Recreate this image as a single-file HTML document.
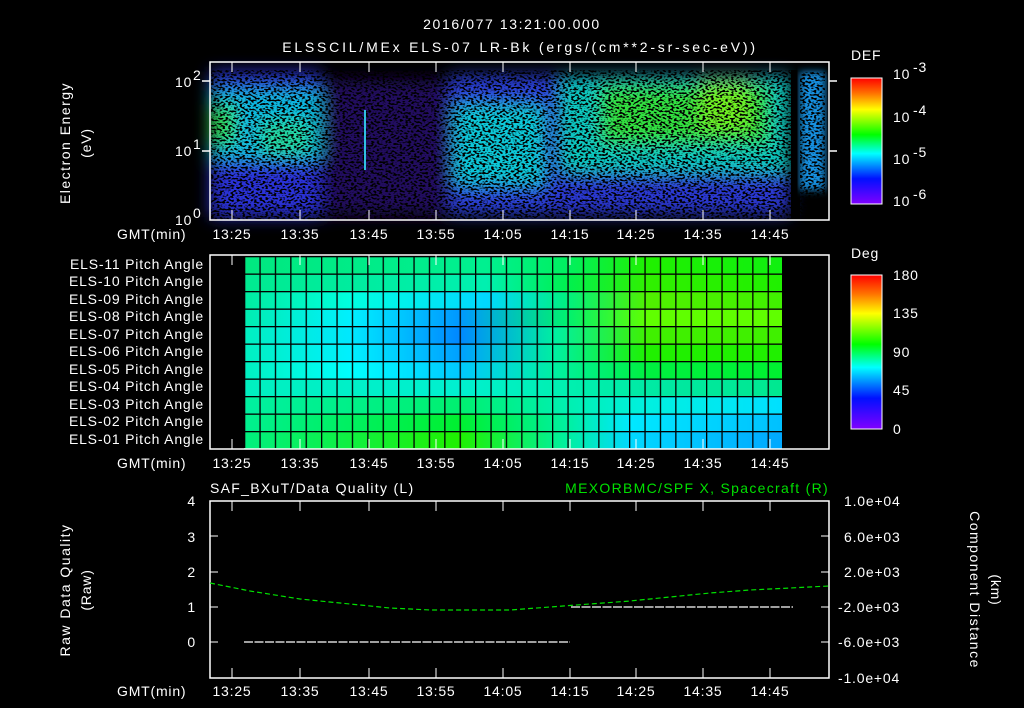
<!DOCTYPE html>
<html><head><meta charset="utf-8"><style>
html,body{margin:0;padding:0;background:#000;width:1024px;height:708px;overflow:hidden}
svg text{font-family:"Liberation Sans",sans-serif;fill:#fff;font-size:14px;letter-spacing:0.8px}
</style></head><body>
<svg width="1024" height="708" viewBox="0 0 1024 708" xmlns="http://www.w3.org/2000/svg">
<defs>
<linearGradient id="cb" x1="0" y1="0" x2="0" y2="1">
<stop offset="0" stop-color="#ff0000"/><stop offset="0.12" stop-color="#ff7000"/><stop offset="0.25" stop-color="#ffff00"/><stop offset="0.45" stop-color="#00ff00"/><stop offset="0.6" stop-color="#00ffff"/><stop offset="0.8" stop-color="#0010ff"/><stop offset="1" stop-color="#8000ff"/>
</linearGradient>
<filter id="bl" x="-20%" y="-20%" width="140%" height="140%"><feGaussianBlur stdDeviation="8"/></filter>
<filter id="bl2"><feGaussianBlur stdDeviation="4"/></filter>
<filter id="spk" x="0" y="0" width="100%" height="100%"><feTurbulence type="fractalNoise" baseFrequency="0.35 0.55" numOctaves="1" seed="7"/><feColorMatrix type="matrix" values="0 0 0 0 0  0 0 0 0 0  0 0 0 0 0  -9 0 0 0 4.6"/></filter>
<linearGradient id="r1"><stop offset="0" stop-color="#00e880"/><stop offset="0.45" stop-color="#00f090"/><stop offset="0.6" stop-color="#00f060"/><stop offset="0.75" stop-color="#20f000"/><stop offset="1" stop-color="#10f010"/></linearGradient>
<linearGradient id="r2"><stop offset="0" stop-color="#00ea90"/><stop offset="0.45" stop-color="#00f0b0"/><stop offset="0.6" stop-color="#00f050"/><stop offset="0.75" stop-color="#30f000"/><stop offset="1" stop-color="#20f000"/></linearGradient>
<linearGradient id="r3"><stop offset="0" stop-color="#00eca0"/><stop offset="0.2" stop-color="#00ffe0"/><stop offset="0.45" stop-color="#00d8ff"/><stop offset="0.6" stop-color="#00f080"/><stop offset="0.75" stop-color="#50f000"/><stop offset="1" stop-color="#40f000"/></linearGradient>
<linearGradient id="r4"><stop offset="0" stop-color="#00eeb0"/><stop offset="0.2" stop-color="#00f0ff"/><stop offset="0.4" stop-color="#0098ff"/><stop offset="0.6" stop-color="#00f070"/><stop offset="0.75" stop-color="#60ff00"/><stop offset="1" stop-color="#60ff00"/></linearGradient>
<linearGradient id="r5"><stop offset="0" stop-color="#00f0c0"/><stop offset="0.2" stop-color="#00e8ff"/><stop offset="0.4" stop-color="#0088ff"/><stop offset="0.58" stop-color="#00f0a0"/><stop offset="0.75" stop-color="#40f000"/><stop offset="1" stop-color="#40f000"/></linearGradient>
<linearGradient id="r6"><stop offset="0" stop-color="#00f0c0"/><stop offset="0.2" stop-color="#00f0ff"/><stop offset="0.4" stop-color="#00a0ff"/><stop offset="0.58" stop-color="#00f0a0"/><stop offset="0.75" stop-color="#20f000"/><stop offset="1" stop-color="#20f000"/></linearGradient>
<linearGradient id="r7"><stop offset="0" stop-color="#00f0c0"/><stop offset="0.2" stop-color="#00ffff"/><stop offset="0.4" stop-color="#00c8ff"/><stop offset="0.58" stop-color="#00f0a0"/><stop offset="0.75" stop-color="#00f040"/><stop offset="1" stop-color="#00f030"/></linearGradient>
<linearGradient id="r8"><stop offset="0" stop-color="#00f0c0"/><stop offset="0.4" stop-color="#00f0d0"/><stop offset="0.6" stop-color="#00f0b0"/><stop offset="0.8" stop-color="#00e8a0"/><stop offset="1" stop-color="#00e890"/></linearGradient>
<linearGradient id="r9"><stop offset="0" stop-color="#00f0a0"/><stop offset="0.4" stop-color="#00f070"/><stop offset="0.6" stop-color="#00f0b0"/><stop offset="0.75" stop-color="#00f0e0"/><stop offset="1" stop-color="#00e0ff"/></linearGradient>
<linearGradient id="r10"><stop offset="0" stop-color="#00f090"/><stop offset="0.4" stop-color="#00f030"/><stop offset="0.6" stop-color="#00f0a0"/><stop offset="0.72" stop-color="#00e8ff"/><stop offset="1" stop-color="#00c0ff"/></linearGradient>
<linearGradient id="r11"><stop offset="0" stop-color="#00f080"/><stop offset="0.4" stop-color="#20f000"/><stop offset="0.6" stop-color="#00f0a0"/><stop offset="0.72" stop-color="#00d8ff"/><stop offset="1" stop-color="#00a8ff"/></linearGradient>
<pattern id="grid" x="244" y="256" width="15.4" height="17.5" patternUnits="userSpaceOnUse"><rect x="0" y="0" width="1.3" height="17.5" fill="#000"/><rect x="0" y="0" width="15.4" height="1.3" fill="#000"/></pattern>
</defs>

<text x="512" y="29" text-anchor="middle" font-size="16" style="letter-spacing:1.6px">2016/077 13:21:00.000</text>
<text x="520" y="52" text-anchor="middle" font-size="17" style="letter-spacing:2.8px">ELSSCIL/MEx ELS-07 LR-Bk  (ergs/(cm**2-sr-sec-eV))</text>

<!-- top spectrogram -->
<rect x="211" y="70" width="580" height="150" fill="#000"/>
<g filter="url(#bl)">
<rect x="211" y="72" width="110" height="145" fill="#2a30d8"/>
<rect x="211" y="90" width="110" height="70" fill="#10b8e0"/>
<rect x="211" y="105" width="25" height="40" fill="#30e060"/>
<rect x="260" y="120" width="50" height="35" fill="#20d8a0"/>
<rect x="322" y="80" width="128" height="135" fill="#200c60"/>
<rect x="450" y="75" width="110" height="140" fill="#2a40d8"/>
<rect x="455" y="105" width="90" height="80" fill="#10c8d8"/>
<rect x="545" y="75" width="245" height="140" fill="#2a38d0"/>
<rect x="560" y="78" width="230" height="95" fill="#10c8c0"/>
<rect x="600" y="85" width="170" height="60" fill="#30e040"/>
<rect x="700" y="80" width="50" height="50" fill="#70f020"/>
</g>
<rect x="211" y="70" width="580" height="150" filter="url(#spk)"/>
<rect x="791" y="70" width="9" height="150" fill="#000"/>
<rect x="800" y="72" width="25" height="118" fill="#1890e0" filter="url(#bl2)"/>
<rect x="800" y="72" width="25" height="145" filter="url(#spk)"/>
<rect x="364" y="110" width="2" height="60" fill="#30c0e0"/>
<rect x="210" y="62" width="619" height="158" fill="none" stroke="#fff" stroke-width="1.5"/>
<g stroke="#fff" stroke-width="1.5">
<line x1="202" y1="81" x2="210" y2="81"/><line x1="202" y1="151" x2="210" y2="151"/>
<line x1="829" y1="81" x2="837" y2="81"/><line x1="829" y1="151" x2="837" y2="151"/>
</g>
<text x="175" y="87" font-size="14">10</text><text x="193" y="80" font-size="9">2</text>
<text x="175" y="156" font-size="14">10</text><text x="193" y="149" font-size="9">1</text>
<text x="175" y="225" font-size="14">10</text><text x="193" y="218" font-size="9">0</text>
<text transform="translate(70,143) rotate(-90)" text-anchor="middle" style="letter-spacing:1.5px">Electron Energy</text>
<text transform="translate(91,143) rotate(-90)" text-anchor="middle">(eV)</text>
<g font-size="14">
<text x="117" y="239">GMT(min)</text>
<text x="232" y="239" text-anchor="middle">13:25</text><text x="300" y="239" text-anchor="middle">13:35</text><text x="369" y="239" text-anchor="middle">13:45</text><text x="436" y="239" text-anchor="middle">13:55</text><text x="503" y="239" text-anchor="middle">14:05</text><text x="570" y="239" text-anchor="middle">14:15</text><text x="636" y="239" text-anchor="middle">14:25</text><text x="703" y="239" text-anchor="middle">14:35</text><text x="770" y="239" text-anchor="middle">14:45</text>
</g>

<!-- DEF colorbar -->
<text x="851" y="60" font-size="15">DEF</text>
<rect x="851" y="78" width="31" height="126" fill="url(#cb)" stroke="#fff" stroke-width="1"/>
<text x="893" y="79" font-size="15">10</text><text x="913" y="72" font-size="10">-3</text>
<text x="893" y="122" font-size="15">10</text><text x="913" y="115" font-size="10">-4</text>
<text x="893" y="164" font-size="15">10</text><text x="913" y="157" font-size="10">-5</text>
<text x="893" y="206" font-size="15">10</text><text x="913" y="199" font-size="10">-6</text>

<!-- middle pitch angle -->
<rect x="244" y="256" width="538" height="192" fill="#000"/>
<g>
<rect x="244" y="256.0" width="538" height="17.5" fill="url(#r1)"/>
<rect x="244" y="273.5" width="538" height="17.5" fill="url(#r2)"/>
<rect x="244" y="291.0" width="538" height="17.5" fill="url(#r3)"/>
<rect x="244" y="308.5" width="538" height="17.5" fill="url(#r4)"/>
<rect x="244" y="326.0" width="538" height="17.5" fill="url(#r5)"/>
<rect x="244" y="343.5" width="538" height="17.5" fill="url(#r6)"/>
<rect x="244" y="361.0" width="538" height="17.5" fill="url(#r7)"/>
<rect x="244" y="378.5" width="538" height="17.5" fill="url(#r8)"/>
<rect x="244" y="396.0" width="538" height="17.5" fill="url(#r9)"/>
<rect x="244" y="413.5" width="538" height="17.5" fill="url(#r10)"/>
<rect x="244" y="431.0" width="538" height="17.5" fill="url(#r11)"/>
</g>
<rect x="244" y="256" width="538" height="192" fill="url(#grid)"/>
<rect x="210" y="255" width="619" height="194" fill="none" stroke="#fff" stroke-width="1.5"/>
<g font-size="13" text-anchor="end" style="letter-spacing:1.1px">
<text x="204" y="269">ELS-11 Pitch Angle</text><text x="204" y="286">ELS-10 Pitch Angle</text><text x="204" y="304">ELS-09 Pitch Angle</text><text x="204" y="321">ELS-08 Pitch Angle</text><text x="204" y="339">ELS-07 Pitch Angle</text><text x="204" y="356">ELS-06 Pitch Angle</text><text x="204" y="374">ELS-05 Pitch Angle</text><text x="204" y="391">ELS-04 Pitch Angle</text><text x="204" y="409">ELS-03 Pitch Angle</text><text x="204" y="426">ELS-02 Pitch Angle</text><text x="204" y="444">ELS-01 Pitch Angle</text>
</g>
<g font-size="14">
<text x="117" y="468">GMT(min)</text>
<text x="232" y="468" text-anchor="middle">13:25</text><text x="300" y="468" text-anchor="middle">13:35</text><text x="369" y="468" text-anchor="middle">13:45</text><text x="436" y="468" text-anchor="middle">13:55</text><text x="503" y="468" text-anchor="middle">14:05</text><text x="570" y="468" text-anchor="middle">14:15</text><text x="636" y="468" text-anchor="middle">14:25</text><text x="703" y="468" text-anchor="middle">14:35</text><text x="770" y="468" text-anchor="middle">14:45</text>
</g>

<!-- Deg colorbar -->
<text x="851" y="258" font-size="15">Deg</text>
<rect x="851" y="275" width="31" height="154" fill="url(#cb)" stroke="#fff" stroke-width="1"/>
<g font-size="15"><text x="893" y="280">180</text><text x="893" y="318">135</text><text x="893" y="357">90</text><text x="893" y="395">45</text><text x="893" y="434">0</text></g>

<!-- bottom -->
<text x="210" y="493" font-size="15" style="letter-spacing:1.3px">SAF_BXuT/Data Quality (L)</text>
<text x="829" y="493" font-size="15" text-anchor="end" style="fill:#00e000;letter-spacing:1.3px">MEXORBMC/SPF X, Spacecraft (R)</text>
<rect x="210" y="501" width="619" height="177" fill="none" stroke="#fff" stroke-width="1.5"/>
<polyline points="210,583 250,591 300,599 350,604 390,608 430,610 470,610 510,610 550,607 590,604 630,601 670,597 710,593 750,590 790,588 829,586" fill="none" stroke="#00e000" stroke-width="1.2" stroke-dasharray="5,3"/>
<line x1="244" y1="642" x2="570" y2="642" stroke="#fff" stroke-width="1.2" stroke-dasharray="9,1.5"/>
<line x1="571" y1="607" x2="793" y2="607" stroke="#fff" stroke-width="1.2" stroke-dasharray="9,1.5"/>
<g font-size="14" text-anchor="end">
<text x="196" y="506">4</text><text x="196" y="542">3</text><text x="196" y="577">2</text><text x="196" y="612">1</text><text x="196" y="647">0</text>
</g>
<g font-size="13">
<text x="844" y="506">1.0e+04</text><text x="844" y="542">6.0e+03</text><text x="844" y="577">2.0e+03</text><text x="838" y="612">-2.0e+03</text><text x="838" y="647">-6.0e+03</text><text x="838" y="683">-1.0e+04</text>
</g>
<text transform="translate(70,590) rotate(-90)" text-anchor="middle" style="letter-spacing:1.5px">Raw Data Quality</text>
<text transform="translate(91,590) rotate(-90)" text-anchor="middle">(Raw)</text>
<text transform="translate(970,590) rotate(90)" text-anchor="middle" style="letter-spacing:1.5px">Component Distance</text>
<text transform="translate(991,590) rotate(90)" text-anchor="middle">(km)</text>
<g font-size="14">
<text x="117" y="696">GMT(min)</text>
<text x="232" y="696" text-anchor="middle">13:25</text><text x="300" y="696" text-anchor="middle">13:35</text><text x="369" y="696" text-anchor="middle">13:45</text><text x="436" y="696" text-anchor="middle">13:55</text><text x="503" y="696" text-anchor="middle">14:05</text><text x="570" y="696" text-anchor="middle">14:15</text><text x="636" y="696" text-anchor="middle">14:25</text><text x="703" y="696" text-anchor="middle">14:35</text><text x="770" y="696" text-anchor="middle">14:45</text>
</g>
<!-- ticks -->
<g stroke="#fff" stroke-width="1">
<path d="M232 62v10M300 62v10M369 62v10M436 62v10M503 62v10M570 62v10M636 62v10M703 62v10M770 62v10M232 220v-10M300 220v-10M369 220v-10M436 220v-10M503 220v-10M570 220v-10M636 220v-10M703 220v-10M770 220v-10"/>
<path d="M232 255v10M300 255v10M369 255v10M436 255v10M503 255v10M570 255v10M636 255v10M703 255v10M770 255v10M232 449v-10M300 449v-10M369 449v-10M436 449v-10M503 449v-10M570 449v-10M636 449v-10M703 449v-10M770 449v-10"/>
<path d="M232 501v10M300 501v10M369 501v10M436 501v10M503 501v10M570 501v10M636 501v10M703 501v10M770 501v10M232 678v-10M300 678v-10M369 678v-10M436 678v-10M503 678v-10M570 678v-10M636 678v-10M703 678v-10M770 678v-10"/>
<path d="M210 536h8M210 572h8M210 607h8M210 642h8M829 536h-8M829 572h-8M829 607h-8M829 642h-8"/>
</g>
</svg>
</body></html>
